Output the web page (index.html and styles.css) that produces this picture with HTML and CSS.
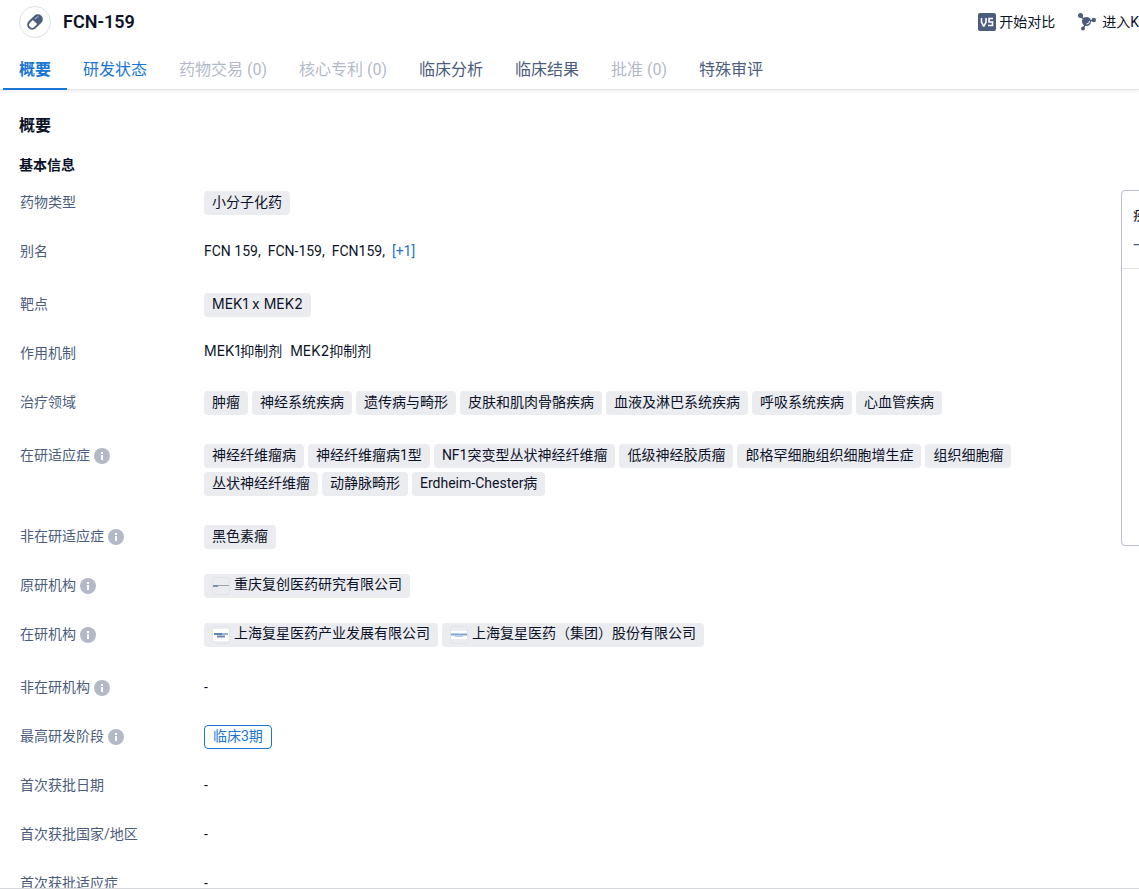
FILE: index.html
```html
<!DOCTYPE html>
<html lang="zh-CN">
<head>
    <meta charset="UTF-8">
    <meta name="viewport" content="width=device-width, initial-scale=1.0">
    <title>FCN-159</title>
    <link rel="stylesheet" href="styles.css">
</head>
<body>
    <svg class="sprite" aria-hidden="true">
        <symbol id="info" viewBox="0 0 16 16">
            <circle cx="8" cy="8" r="8" fill="#b3b9c7"/>
            <path d="M7 4h2v2H7zM7 7h2v5H7z" fill="#fff"/>
        </symbol>
    </svg>

    <header class="header">
        <div class="drug">
            <span class="drug-icon">
                <svg width="18" height="18" viewBox="0 0 18 18">
                    <g transform="rotate(-45 9 9)">
                        <rect x="0" y="4" width="18" height="10" rx="5" fill="#4b5c7d"/>
                        <path d="M9 6H5a3 3 0 0 0 0 6h4z" fill="#fff"/>
                        <path d="M11 7h3a1 1 0 0 1 1 1" fill="none" stroke="#aeb7c6" stroke-width="1"/>
                    </g>
                </svg>
            </span>
            <h1 class="drug-name">FCN-159</h1>
        </div>
        <div class="actions">
            <button class="action" type="button">
                <svg width="18" height="18" viewBox="0 0 18 18">
                    <rect x="0" y="0" width="18" height="18" rx="2" fill="#4b5c7d"/>
                    <path d="M3.500 5v4l2 4h.5l2-4V5M15 5.500h-4v3.500h3.500v3.500H10" fill="none" stroke="#fff" stroke-width="1.600"/>
                </svg>
                开始对比
            </button>
            <button class="action action-graph" type="button">
                <svg width="18" height="18" viewBox="0 0 18 18">
                    <path d="M2.500 2.500L8.500 9M8.500 9L15.500 7M8.500 9L5 15.500" stroke="#4b5c7d" stroke-width="1.500"/>
                    <circle cx="2.500" cy="2.500" r="2.500" fill="#4b5c7d"/>
                    <circle cx="8.500" cy="8.500" r="4.500" fill="#4b5c7d"/>
                    <circle cx="15.800" cy="7" r="2.200" fill="#4b5c7d"/>
                    <circle cx="5" cy="15.500" r="2" fill="#4b5c7d"/>
                    <path d="M8.500 11a3 3 0 0 0 3-3" fill="none" stroke="#fff" stroke-width="1"/>
                </svg>
                进入K
            </button>
        </div>
    </header>

    <nav class="tabs">
        <a class="tab active" href="#overview">概要</a>
        <a class="tab link" href="#status">研发状态</a>
        <a class="tab disabled" href="#deals">药物交易 (0)</a>
        <a class="tab disabled" href="#patents">核心专利 (0)</a>
        <a class="tab" href="#analysis">临床分析</a>
        <a class="tab" href="#results">临床结果</a>
        <a class="tab disabled" href="#approval">批准 (0)</a>
        <a class="tab" href="#review">特殊审评</a>
    </nav>

    <main class="content" id="overview">
        <h2 class="section-title">概要</h2>
        <h3 class="sub-title">基本信息</h3>
        <div class="columns">
            <dl class="info">
                <div class="row">
                    <dt>药物类型</dt>
                    <dd><span class="tag">小分子化药</span></dd>
                </div>
                <div class="row row-list">
                    <dt>别名</dt>
                    <dd class="alias"><span>FCN 159,</span><span>FCN-159,</span><span>FCN159,</span><a href="#alias">[+1]</a></dd>
                </div>
                <div class="row">
                    <dt>靶点</dt>
                    <dd><a class="tag target" href="#target">MEK1 x MEK2</a></dd>
                </div>
                <div class="row">
                    <dt>作用机制</dt>
                    <dd class="mechanism"><span>MEK1抑制剂</span><span>MEK2抑制剂</span></dd>
                </div>
                <div class="row row-list">
                    <dt>治疗领域</dt>
                    <dd>
                        <span class="tag">肿瘤</span>
                        <span class="tag">神经系统疾病</span>
                        <span class="tag">遗传病与畸形</span>
                        <span class="tag">皮肤和肌肉骨骼疾病</span>
                        <span class="tag">血液及淋巴系统疾病</span>
                        <span class="tag">呼吸系统疾病</span>
                        <span class="tag">心血管疾病</span>
                    </dd>
                </div>
                <div class="row row-list">
                    <dt>在研适应症<svg class="info-icon"><use href="#info"/></svg></dt>
                    <dd>
                        <a class="tag" href="#d1">神经纤维瘤病</a>
                        <a class="tag" href="#d2">神经纤维瘤病1型</a>
                        <a class="tag" href="#d3">NF1突变型丛状神经纤维瘤</a>
                        <a class="tag" href="#d4">低级神经胶质瘤</a>
                        <a class="tag" href="#d5">郎格罕细胞组织细胞增生症</a>
                        <a class="tag" href="#d6">组织细胞瘤</a>
                        <a class="tag" href="#d7">丛状神经纤维瘤</a>
                        <a class="tag" href="#d8">动静脉畸形</a>
                        <a class="tag" href="#d9">Erdheim-Chester病</a>
                    </dd>
                </div>
                <div class="row">
                    <dt>非在研适应症<svg class="info-icon"><use href="#info"/></svg></dt>
                    <dd><a class="tag" href="#d10">黑色素瘤</a></dd>
                </div>
                <div class="row">
                    <dt>原研机构<svg class="info-icon"><use href="#info"/></svg></dt>
                    <dd>
                        <a class="tag org" href="#o1">
                            <svg class="logo" viewBox="0 0 18 18">
                                <rect x="0.500" y="0.500" width="17" height="17" rx="3" fill="#ebecf0" stroke="#e0e2e7"/>
                                <path d="M1 9h5" stroke="#55738f" stroke-width="1.500"/>
                                <path d="M6 8.500h11" stroke="#9aa5b2" stroke-width="1"/>
                            </svg>
                            重庆复创医药研究有限公司
                        </a>
                    </dd>
                </div>
                <div class="row row-list">
                    <dt>在研机构<svg class="info-icon"><use href="#info"/></svg></dt>
                    <dd>
                        <a class="tag org" href="#o2">
                            <svg class="logo" viewBox="0 0 18 18">
                                <rect x="0.500" y="0.500" width="17" height="17" rx="3" fill="#ebecf0" stroke="#e0e2e7"/>
                                <path d="M1 3h16v12H1z" fill="#fff"/>
                                <path d="M2 8h8" stroke="#5f86b0" stroke-width="2"/>
                                <path d="M10 8h6" stroke="#8fb7d6" stroke-width="2"/>
                                <path d="M5 10.500h8" stroke="#7583a8" stroke-width="2"/>
                            </svg>
                            上海复星医药产业发展有限公司
                        </a>
                        <a class="tag org" href="#o3">
                            <svg class="logo" viewBox="0 0 18 18">
                                <rect x="0.500" y="0.500" width="17" height="17" rx="3" fill="#ebecf0" stroke="#e0e2e7"/>
                                <path d="M1 5h16v8H1z" fill="#fff"/>
                                <path d="M1 8.500h16" stroke="#7ba4cf" stroke-width="2"/>
                                <path d="M5 10.500h8" stroke="#b2cbe2" stroke-width="1"/>
                            </svg>
                            上海复星医药（集团）股份有限公司
                        </a>
                    </dd>
                </div>
                <div class="row">
                    <dt>非在研机构<svg class="info-icon"><use href="#info"/></svg></dt>
                    <dd>-</dd>
                </div>
                <div class="row">
                    <dt>最高研发阶段<svg class="info-icon"><use href="#info"/></svg></dt>
                    <dd><span class="tag phase">临床3期</span></dd>
                </div>
                <div class="row">
                    <dt>首次获批日期</dt>
                    <dd>-</dd>
                </div>
                <div class="row">
                    <dt>首次获批国家/地区</dt>
                    <dd>-</dd>
                </div>
                <div class="row">
                    <dt>首次获批适应症</dt>
                    <dd>-</dd>
                </div>
            </dl>
            <aside class="panel">
                <div class="panel-head">
                    <div class="panel-title">疾</div>
                    <div class="panel-sub">一</div>
                </div>
            </aside>
        </div>
    </main>
</body>
</html>
```

FILE: styles.css
```css
:root {
    --text: #0b1228;
    --slate: #4b5c7d;
    --muted: #b3b9c7;
    --blue: #1976d2;
    --tag-bg: #ebecf0;
    --line: #dfe1e6;
}

* {
    margin: 0;
    padding: 0;
    box-sizing: border-box;
}

body {
    display: flex;
    flex-direction: column;
    height: 100vh;
    overflow: hidden;
    background: #fff;
    color: var(--text);
    font-family: Roboto, "Noto Sans CJK SC", sans-serif;
    font-size: 14px;
    line-height: 22px;
    border-bottom: 1px solid #d5d7db;
}

a {
    color: inherit;
    text-decoration: none;
}

.sprite {
    position: absolute;
    width: 0;
    height: 0;
}

.header {
    display: flex;
    flex: none;
    justify-content: space-between;
    align-items: center;
    height: 44px;
    padding-left: 19px;
}

.drug {
    display: flex;
    align-items: center;
    gap: 12px;
}

.drug-icon {
    display: flex;
    align-items: center;
    justify-content: center;
    width: 32px;
    height: 32px;
    border: 1px solid var(--line);
    border-radius: 50%;
}

.drug-name {
    font-size: 18px;
    font-weight: 600;
}

.actions {
    display: flex;
    gap: 23px;
}

.action {
    display: flex;
    align-items: center;
    gap: 3px;
    border: none;
    background: none;
    color: var(--text);
    font: inherit;
    white-space: nowrap;
    cursor: pointer;
}

.action-graph {
    gap: 6px;
}

.tabs {
    display: flex;
    flex: none;
    height: 46px;
    padding-left: 3px;
    border-bottom: 1px solid var(--line);
    box-shadow: 0 2px 4px rgba(0, 0, 0, 0.06);
}

.tab {
    height: 46px;
    padding: 0 16px;
    color: var(--slate);
    font-size: 16px;
    line-height: 51px;
    white-space: nowrap;
}

.tab.link {
    color: var(--blue);
}

.tab.disabled {
    color: var(--muted);
}

.tab.active {
    border-bottom: 2px solid var(--blue);
    color: var(--blue);
    font-weight: bold;
}

.content {
    flex: 1;
    min-height: 0;
    overflow: hidden;
    padding: 24px 0 0 19px;
}

.section-title {
    font-size: 16px;
    line-height: 24px;
}

.sub-title {
    margin-top: 16px;
    font-size: 14px;
    line-height: 22px;
}

.columns {
    display: flex;
    align-items: flex-start;
    margin-top: 14px;
}

.info {
    flex: 1;
    padding: 1px 20px 0 1px;
}

.row {
    display: flex;
    padding-bottom: 25px;
}

.row-list {
    padding-bottom: 29px;
}

dt {
    display: flex;
    flex: none;
    align-items: flex-start;
    gap: 4px;
    width: 184px;
    height: 24px;
    color: var(--slate);
}

.info-icon {
    width: 16px;
    height: 16px;
    margin-top: 4px;
}

dd {
    display: flex;
    flex: 1;
    flex-wrap: wrap;
    gap: 4px;
}

.alias {
    gap: 7px;
}

.alias a {
    color: var(--blue);
}

.mechanism {
    gap: 8px;
    font-family: Inter, "Noto Sans CJK SC", sans-serif;
    line-height: 18px;
}

.tag {
    height: 24px;
    padding: 0 8px;
    border-radius: 4px;
    background: var(--tag-bg);
    line-height: 23px;
    white-space: nowrap;
}

.target {
    font-family: Inter, sans-serif;
    line-height: 22px;
}

.org {
    display: flex;
    align-items: flex-start;
    gap: 4px;
    line-height: 20px;
}

.logo {
    width: 18px;
    height: 18px;
    margin-top: 3px;
}

.phase {
    border: 1px solid var(--blue);
    background: #fff;
    color: var(--blue);
    line-height: 20px;
}

/* wider than the space left for it, runs past the right edge */
.panel {
    flex: none;
    width: 340px;
    height: 356px;
    margin-right: -322px;
    border: 1px solid #b9bfcc;
    border-radius: 4px;
}

.panel-head {
    padding: 12px 11px;
    border-bottom: 1px solid var(--line);
}

.panel-title {
    line-height: 24px;
}

.panel-sub {
    margin-top: 7px;
    color: var(--slate);
}
```
